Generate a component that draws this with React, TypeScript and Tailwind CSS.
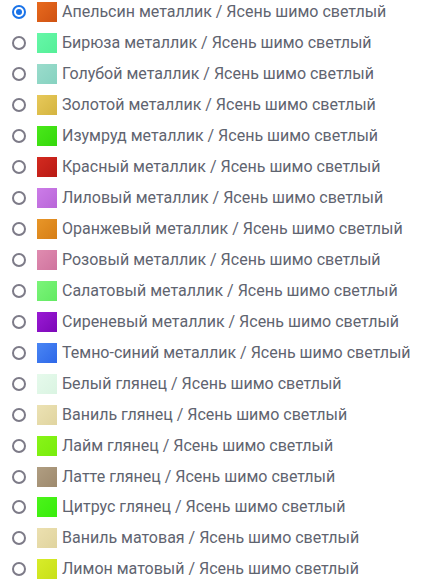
import React, { useState } from 'react';

type Finish = { name: string; from: string; to: string };

// color swatches: two-tone gradient gives a bit of that metallic look
const finishes: Finish[] = [
  { name: 'Апельсин металлик', from: '#e86a1e', to: '#cf5212' },
  { name: 'Бирюза металлик', from: '#66f7a8', to: '#55ef98' },
  { name: 'Голубой металлик', from: '#9adccc', to: '#86d2c0' },
  { name: 'Золотой металлик', from: '#e8c95a', to: '#d4b440' },
  { name: 'Изумруд металлик', from: '#4ae81a', to: '#34d80c' },
  { name: 'Красный металлик', from: '#d42a20', to: '#b81a14' },
  { name: 'Лиловый металлик', from: '#cc7ce8', to: '#b866d8' },
  { name: 'Оранжевый металлик', from: '#e89628', to: '#d67e16' },
  { name: 'Розовый металлик', from: '#e08cb0', to: '#cf749e' },
  { name: 'Салатовый металлик', from: '#7cf47a', to: '#62ea62' },
  { name: 'Сиреневый металлик', from: '#9a1ad4', to: '#7c08b8' },
  { name: 'Темно-синий металлик', from: '#4a86f4', to: '#2e68e8' },
  { name: 'Белый глянец', from: '#e6faec', to: '#daf4e2' },
  { name: 'Ваниль глянец', from: '#ece2b4', to: '#e0d4a0' },
  { name: 'Лайм глянец', from: '#88f418', to: '#78ec0c' },
  { name: 'Латте глянец', from: '#b09e82', to: '#9e8a6e' },
  { name: 'Цитрус глянец', from: '#4cf41a', to: '#38ec0c' },
  { name: 'Ваниль матовая', from: '#ece0b0', to: '#e0d49e' },
  { name: 'Лимон матовый', from: '#d8ec2a', to: '#c8e018' },
];

const App: React.FC = () => {
  const [selected, setSelected] = useState(0);

  return (
    <div className="w-[424px] h-[585px] overflow-hidden bg-white" style={{ fontFamily: 'Roboto, "Noto Sans", sans-serif' }}>
      <ul className="-mt-[3px] pl-[12px]">
        {finishes.map((f, i) => (
          <li
            key={f.name}
            onClick={() => setSelected(i)}
            className="flex h-[30.95px] cursor-pointer items-center"
          >
            <span
              className={`flex h-[14px] w-[14px] shrink-0 items-center justify-center rounded-full border-2 ${
                selected === i ? 'border-[#1a73e8]' : 'border-[#7d7b88]'
              }`}
            >
              {selected === i && <span className="h-[6px] w-[6px] rounded-full bg-[#1a73e8]" />}
            </span>
            <span
              className="ml-[11px] h-[20px] w-[20px] shrink-0"
              style={{ background: `linear-gradient(135deg, ${f.from}, ${f.to})` }}
            />
            <span className="ml-[5px] whitespace-nowrap text-[16px] text-[#5f6470]">
              {f.name} / Ясень шимо светлый
            </span>
          </li>
        ))}
      </ul>
    </div>
  );
};

export default App;
